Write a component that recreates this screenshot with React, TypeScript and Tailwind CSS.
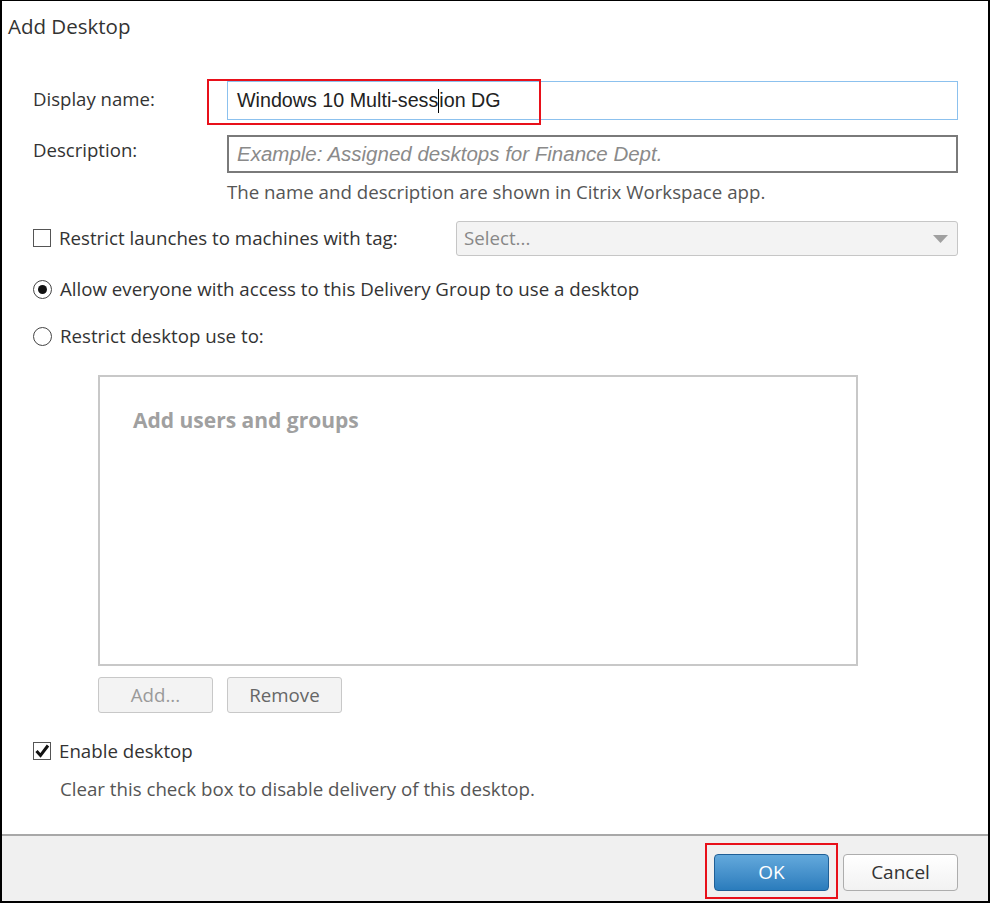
import React from 'react'

const ui = { fontFamily: '"Open Sans", "Noto Sans", sans-serif' }
const arial = { fontFamily: '"Liberation Sans", Arial, sans-serif' }

const CheckBox = ({ checked }: { checked?: boolean }) => (
    <span className="relative inline-block w-[18px] h-[18px] border border-[#555] bg-white shrink-0">
        {checked && (
            <svg viewBox="0 0 18 18" className="absolute -left-px -top-px w-[18px] h-[18px]">
                <path d="M3.5 9 L7.5 13.5 L15 3.5" fill="none" stroke="#111" strokeWidth="3" />
            </svg>
        )}
    </span>
)

const Radio = ({ checked }: { checked?: boolean }) => (
    <span className="inline-flex items-center justify-center w-[19px] h-[19px] rounded-full border-[1.5px] border-[#444] bg-white shrink-0">
        {checked && <span className="w-[9px] h-[9px] rounded-full bg-[#111]" />}
    </span>
)

const App = () => {
    return (
        <div className="w-[990px] h-[903px] bg-white border-x-2 border-b-2 border-t border-black flex flex-col text-[#333]" style={ui}>
            {/* Title */}
            <div className="pl-[6px] pt-[11px] text-[20.5px] leading-[28px] text-[#333]">Add Desktop</div>

            <div className="flex-1 pl-[31px] pr-[30px]">
                {/* Display name */}
                <div className="mt-[41px] flex items-center">
                    <div className="w-[194px] text-[18.6px] -mt-[4px]">Display name:</div>
                    <div className="relative flex-1">
                        <div className="h-[39px] border border-[#8cc1ee] flex items-center pl-[9px] text-[19.7px] text-[#222]" style={arial}>
                            Windows 10 Multi-sess<span className="inline-block w-px h-[24px] bg-black" />ion DG
                        </div>
                        <div className="absolute -left-[20px] -top-[2px] w-[334px] h-[46px] border-2 border-[#e8101a]" />
                    </div>
                </div>

                {/* Description */}
                <div className="mt-[15px] flex items-center">
                    <div className="w-[194px] text-[18.6px] -mt-[8px]">Description:</div>
                    <div className="flex-1 h-[38px] border-2 border-[#7a7a7a] flex items-center pl-[8px] text-[20.5px] italic text-[#8a8a8a]" style={arial}>
                        Example: Assigned desktops for Finance Dept.
                    </div>
                </div>
                <div className="ml-[194px] mt-[7px] text-[18.7px] leading-[24px] text-[#555]">
                    The name and description are shown in Citrix Workspace app.
                </div>

                {/* Tag restriction */}
                <div className="mt-[17px] flex items-center">
                    <div className="w-[423px] flex items-center gap-[8px] text-[18.7px]">
                        <CheckBox />
                        <span>Restrict launches to machines with tag:</span>
                    </div>
                    <div className="flex-1 h-[35px] rounded-[3px] border border-[#c6c6c6] bg-[#f3f3f3] flex items-center justify-between pl-[7px] pr-[9px]">
                        <span className="text-[18.7px] text-[#888]">Select...</span>
                        <svg width="15" height="8" viewBox="0 0 15 8">
                            <path d="M0 0 H15 L7.5 8 Z" fill="#a0a0a0" />
                        </svg>
                    </div>
                </div>

                {/* Radios */}
                <div className="mt-[21px] flex items-center gap-[8px] text-[18.7px] leading-[24px]">
                    <Radio checked />
                    <span>Allow everyone with access to this Delivery Group to use a desktop</span>
                </div>
                <div className="mt-[23px] flex items-center gap-[8px] text-[18.7px] leading-[24px]">
                    <Radio />
                    <span>Restrict desktop use to:</span>
                </div>

                {/* Users and groups */}
                <div className="ml-[65px] mt-[27px] w-[760px]">
                    <div className="h-[291px] border-2 border-[#c8c8c8] pl-[33px] pt-[28px]">
                        <div className="text-[21px] font-bold text-[#a0a0a0]">Add users and groups</div>
                    </div>
                    <div className="mt-[11px] flex gap-[14px]">
                        <button className="w-[115px] h-[36px] rounded-[3px] border border-[#c8c8c8] bg-[#f3f3f3] text-[18.7px] text-[#9a9a9a]">Add...</button>
                        <button className="w-[115px] h-[36px] rounded-[3px] border border-[#c8c8c8] bg-[#f3f3f3] text-[18.7px] text-[#666]">Remove</button>
                    </div>
                </div>

                {/* Enable desktop */}
                <div className="mt-[26px] flex items-center gap-[8px] text-[18.7px] leading-[24px]">
                    <CheckBox checked />
                    <span>Enable desktop</span>
                </div>
                <div className="ml-[27px] mt-[14px] text-[18.7px] leading-[24px] text-[#555]">
                    Clear this check box to disable delivery of this desktop.
                </div>
            </div>

            {/* Footer */}
            <div className="h-[67px] border-t-2 border-[#a8a8a8] bg-[#f0f0f0] flex items-start justify-end gap-[14px] pr-[30px] pt-[18px]">
                <div className="relative">
                    <button className="w-[115px] h-[37px] rounded-[4px] border border-[#1f5f96] bg-gradient-to-b from-[#63a9dc] to-[#2a7cbc] text-white text-[19px]">OK</button>
                    <div className="absolute -left-[9px] -top-[11px] w-[133px] h-[56px] border-2 border-[#e8101a]" />
                </div>
                <button className="w-[115px] h-[37px] rounded-[4px] border border-[#adadad] bg-gradient-to-b from-white to-[#f2f2f2] text-[19px] text-[#333]">Cancel</button>
            </div>
        </div>
    )
}

export default App
